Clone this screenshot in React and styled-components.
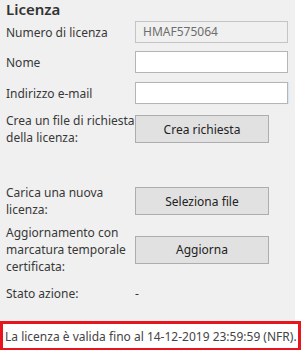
import styled, { createGlobalStyle } from "styled-components";

const Global = createGlobalStyle`
  html, body { margin: 0; padding: 0; background: #fff; }
  body { font-family: "Segoe UI", "Noto Sans", "Liberation Sans", sans-serif; font-size: 12px; color: #333; }
`;

const Page = styled.div`
  width: 301px;
  height: 350px;
  display: flex;
  flex-direction: column;
`;

const Panel = styled.div`
  width: 295px;
  height: 321px;
  background: #f0f0f0;
  padding: 0 0 0 6px;
  box-sizing: border-box;
`;

const Heading = styled.div`
  font-size: 15px;
  font-weight: 600;
  color: #333;
  line-height: 19px;
`;

const Row = styled.div`
  display: flex;
  align-items: center;
  margin-top: ${(p) => p.$gap || 0}px;
  min-height: ${(p) => p.$h || 22}px;
`;

const Label = styled.div`
  width: 129px;
  line-height: 17px;
  color: #383838;
  flex-shrink: 0;
`;

const Field = styled.div`
  width: 153px;
  height: 22px;
  box-sizing: border-box;
  border: 1px solid ${(p) => (p.$disabled ? "#c4c4c4" : "#b5b5b5")};
  background: ${(p) => (p.$disabled ? "#f0f0f0" : "#fff")};
  color: #6d6d6d;
  padding: 0 0 0 7px;
  line-height: 20px;
  box-shadow: ${(p) => (p.$focus ? "1px 0 1px #d4e6f7" : "none")};
`;

const Button = styled.div`
  width: 134px;
  height: 28px;
  box-sizing: border-box;
  border: 1px solid #adadad;
  background: #e1e1e1;
  color: #222;
  font-size: 12px;
  display: flex;
  align-items: center;
  justify-content: center;
`;

const Value = styled.div`
  color: #333;
`;

const Footer = styled.div`
  height: 29px;
  border: 3px solid #e8151f;
  border-bottom-width: 2px;
  background: #fff;
  box-sizing: border-box;
  display: flex;
  align-items: center;
  padding-left: 2px;
  color: #444;
  white-space: nowrap;
`;

export default function App() {
  return (
    <Page>
      <Global />
      <Panel>
        <Heading>Licenza</Heading>
        <Row $gap={2}>
          <Label>Numero di licenza</Label>
          <Field $disabled>HMAF575064</Field>
        </Row>
        <Row $gap={8}>
          <Label>Nome</Label>
          <Field />
        </Row>
        <Row $gap={9}>
          <Label>Indirizzo e-mail</Label>
          <Field $focus />
        </Row>
        <Row $gap={8}>
          <Label>Crea un file di richiesta della licenza:</Label>
          <Button>Crea richiesta</Button>
        </Row>
        <Row $gap={38}>
          <Label>Carica una nuova licenza:</Label>
          <Button>Seleziona file</Button>
        </Row>
        <Row $gap={6}>
          <Label>Aggiornamento con marcatura temporale certificata:</Label>
          <Button>Aggiorna</Button>
        </Row>
        <Row $gap={10} $h={17}>
          <Label>Stato azione:</Label>
          <Value>-</Value>
        </Row>
      </Panel>
      <Footer>La licenza è valida fino al 14-12-2019 23:59:59 (NFR).</Footer>
    </Page>
  );
}
